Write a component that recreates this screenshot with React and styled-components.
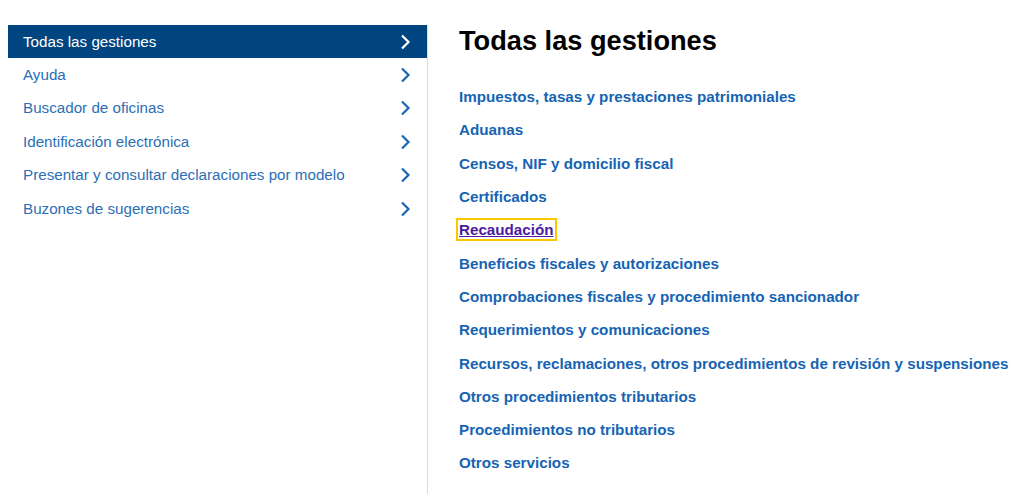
import React from "react";
import styled, { createGlobalStyle } from "styled-components";

const Global = createGlobalStyle`
  html, body { margin: 0; padding: 0; background: #fff; }
  body { font-family: "Liberation Sans", Arial, sans-serif; }
  #root { height: 494px; overflow: hidden; }
`;

const Page = styled.div`
  display: flex;
  align-items: stretch;
  padding: 25px 0 0 8px;
  height: 100%;
  box-sizing: border-box;
`;

const Side = styled.nav`
  width: 420px;
  box-sizing: border-box;
  border-right: 1px solid #dcdcdc;
  flex-shrink: 0;
`;

const SideList = styled.ul`
  list-style: none;
  margin: 0;
  padding: 0;
`;

const SideItem = styled.li`
  height: 33.4px;
  display: flex;
  align-items: center;
  justify-content: space-between;
  padding: 0 16px 0 15px;
  background: ${(p) => (p.$active ? "#004580" : "transparent")};
  color: ${(p) => (p.$active ? "#ffffff" : "#2b6fb6")};
  font-size: 15.2px;
  cursor: pointer;
  span { position: relative; top: -0.5px; }
`;

const Chevron = ({ color }) => (
  <svg width="11" height="16" viewBox="0 0 11 16" aria-hidden="true">
    <path d="M2 1.5 L8.5 8 L2 14.5" fill="none" stroke={color} strokeWidth="2.2" />
  </svg>
);

const Main = styled.main`
  padding: 0 0 0 31px;
`;

const Title = styled.h1`
  margin: 0;
  font-size: 27.2px;
  font-weight: bold;
  color: #000;
  line-height: 32px;
`;

const LinkList = styled.ul`
  list-style: none;
  margin: 23px 0 0;
  padding: 0;
`;

const LinkItem = styled.li`
  height: 33.3px;
  display: flex;
  align-items: center;
`;

const Link = styled.a`
  font-size: 15.2px;
  font-weight: bold;
  color: ${(p) => (p.$visited ? "#4b1aa1" : "#1564b3")};
  text-decoration: ${(p) => (p.$focused ? "underline" : "none")};
  outline: ${(p) => (p.$focused ? "2px solid #fdc700" : "none")};
  outline-offset: 1px;
  white-space: nowrap;
`;

const sideItems = [
  "Todas las gestiones",
  "Ayuda",
  "Buscador de oficinas",
  "Identificación electrónica",
  "Presentar y consultar declaraciones por modelo",
  "Buzones de sugerencias",
];

const links = [
  "Impuestos, tasas y prestaciones patrimoniales",
  "Aduanas",
  "Censos, NIF y domicilio fiscal",
  "Certificados",
  "Recaudación",
  "Beneficios fiscales y autorizaciones",
  "Comprobaciones fiscales y procedimiento sancionador",
  "Requerimientos y comunicaciones",
  "Recursos, reclamaciones, otros procedimientos de revisión y suspensiones",
  "Otros procedimientos tributarios",
  "Procedimientos no tributarios",
  "Otros servicios",
];

export default function App() {
  return (
    <>
      <Global />
      <Page>
        <Side>
          <SideList>
            {sideItems.map((t, i) => (
              <SideItem key={t} $active={i === 0}>
                <span>{t}</span>
                <Chevron color={i === 0 ? "#ffffff" : "#1a66b3"} />
              </SideItem>
            ))}
          </SideList>
        </Side>
        <Main>
          <Title>Todas las gestiones</Title>
          <LinkList>
            {links.map((t) => (
              <LinkItem key={t}>
                <Link href="#" $visited={t === "Recaudación"} $focused={t === "Recaudación"}>
                  {t}
                </Link>
              </LinkItem>
            ))}
          </LinkList>
        </Main>
      </Page>
    </>
  );
}
